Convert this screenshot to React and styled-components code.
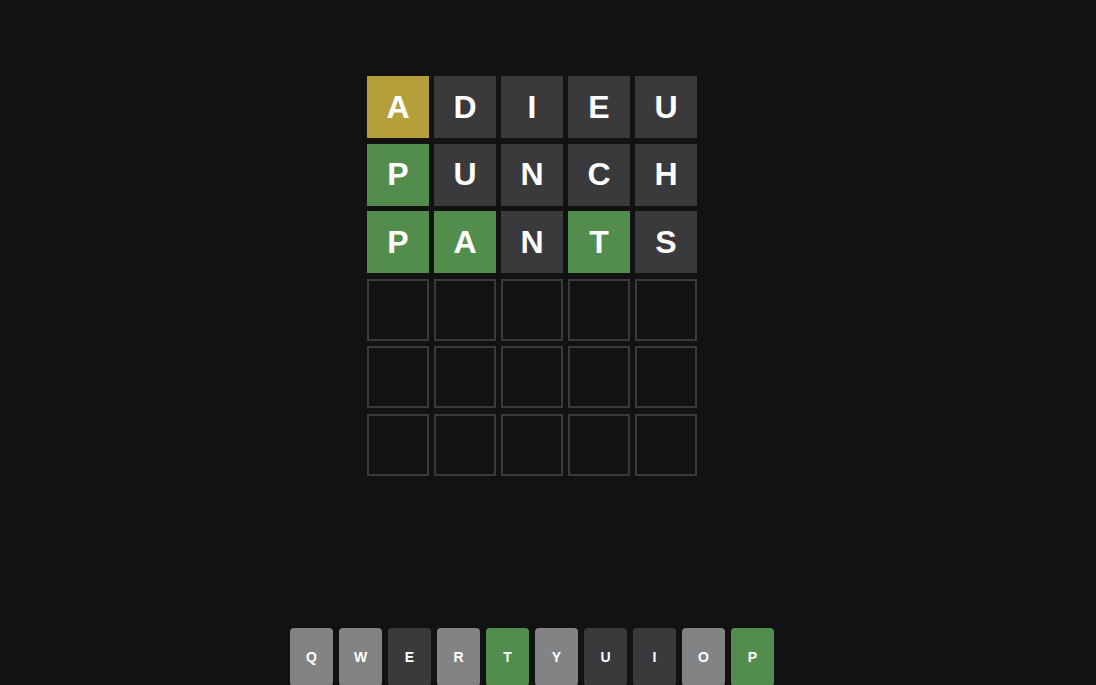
import React from "react";
import styled, { createGlobalStyle } from "styled-components";

const GlobalStyle = createGlobalStyle`
  html, body {
    margin: 0;
    padding: 0;
    background: #121212;
    overflow: hidden;
    font-family: "Liberation Sans", Arial, sans-serif;
  }
`;

const guesses = [
  [["A", "present"], ["D", "absent"], ["I", "absent"], ["E", "absent"], ["U", "absent"]],
  [["P", "correct"], ["U", "absent"], ["N", "absent"], ["C", "absent"], ["H", "absent"]],
  [["P", "correct"], ["A", "correct"], ["N", "absent"], ["T", "correct"], ["S", "absent"]],
];

const keys = [
  ["Q", "unused"], ["W", "unused"], ["E", "absent"], ["R", "unused"], ["T", "correct"],
  ["Y", "unused"], ["U", "absent"], ["I", "absent"], ["O", "unused"], ["P", "correct"],
];

const colors = {
  correct: "#538d4e",
  present: "#b59f3b",
  absent: "#3a3a3c",
  unused: "#818384",
  empty: "transparent",
};

const App = () => {
  const rows = [...guesses];
  while (rows.length < 6) rows.push(Array(5).fill(["", "empty"]));

  return (
    <Page>
      <GlobalStyle />
      <Board>
        {rows.map((row, i) => (
          <Row key={i}>
            {row.map(([letter, state], j) => (
              <Tile key={j} $state={state}>
                {letter}
              </Tile>
            ))}
          </Row>
        ))}
      </Board>
      <Keyboard>
        {keys.map(([letter, state]) => (
          <Key key={letter} $state={state}>
            {letter}
          </Key>
        ))}
      </Keyboard>
    </Page>
  );
};

export default App;

const Page = styled.div`
  width: 1064px;
  height: 685px;
  display: flex;
  flex-direction: column;
  align-items: center;
  padding-top: 76px;
  box-sizing: border-box;
`;

const Board = styled.div`
  display: grid;
  grid-template-rows: repeat(6, 62px);
  row-gap: 5.6px;
`;

const Row = styled.div`
  display: grid;
  grid-template-columns: repeat(5, 62px);
  column-gap: 5px;
`;

const Tile = styled.div`
  display: flex;
  align-items: center;
  justify-content: center;
  box-sizing: border-box;
  background: ${(p) => colors[p.$state]};
  border: ${(p) => (p.$state === "empty" ? "2px solid #3a3a3c" : "none")};
  color: #fff;
  font-size: 32px;
  font-weight: 700;
  text-transform: uppercase;
`;

const Keyboard = styled.div`
  display: flex;
  gap: 6px;
  margin-top: 152px;
`;

const Key = styled.div`
  width: 43px;
  height: 58px;
  border-radius: 4px;
  display: flex;
  align-items: center;
  justify-content: center;
  background: ${(p) => colors[p.$state]};
  color: #fff;
  font-size: 14px;
  font-weight: 700;
`;
